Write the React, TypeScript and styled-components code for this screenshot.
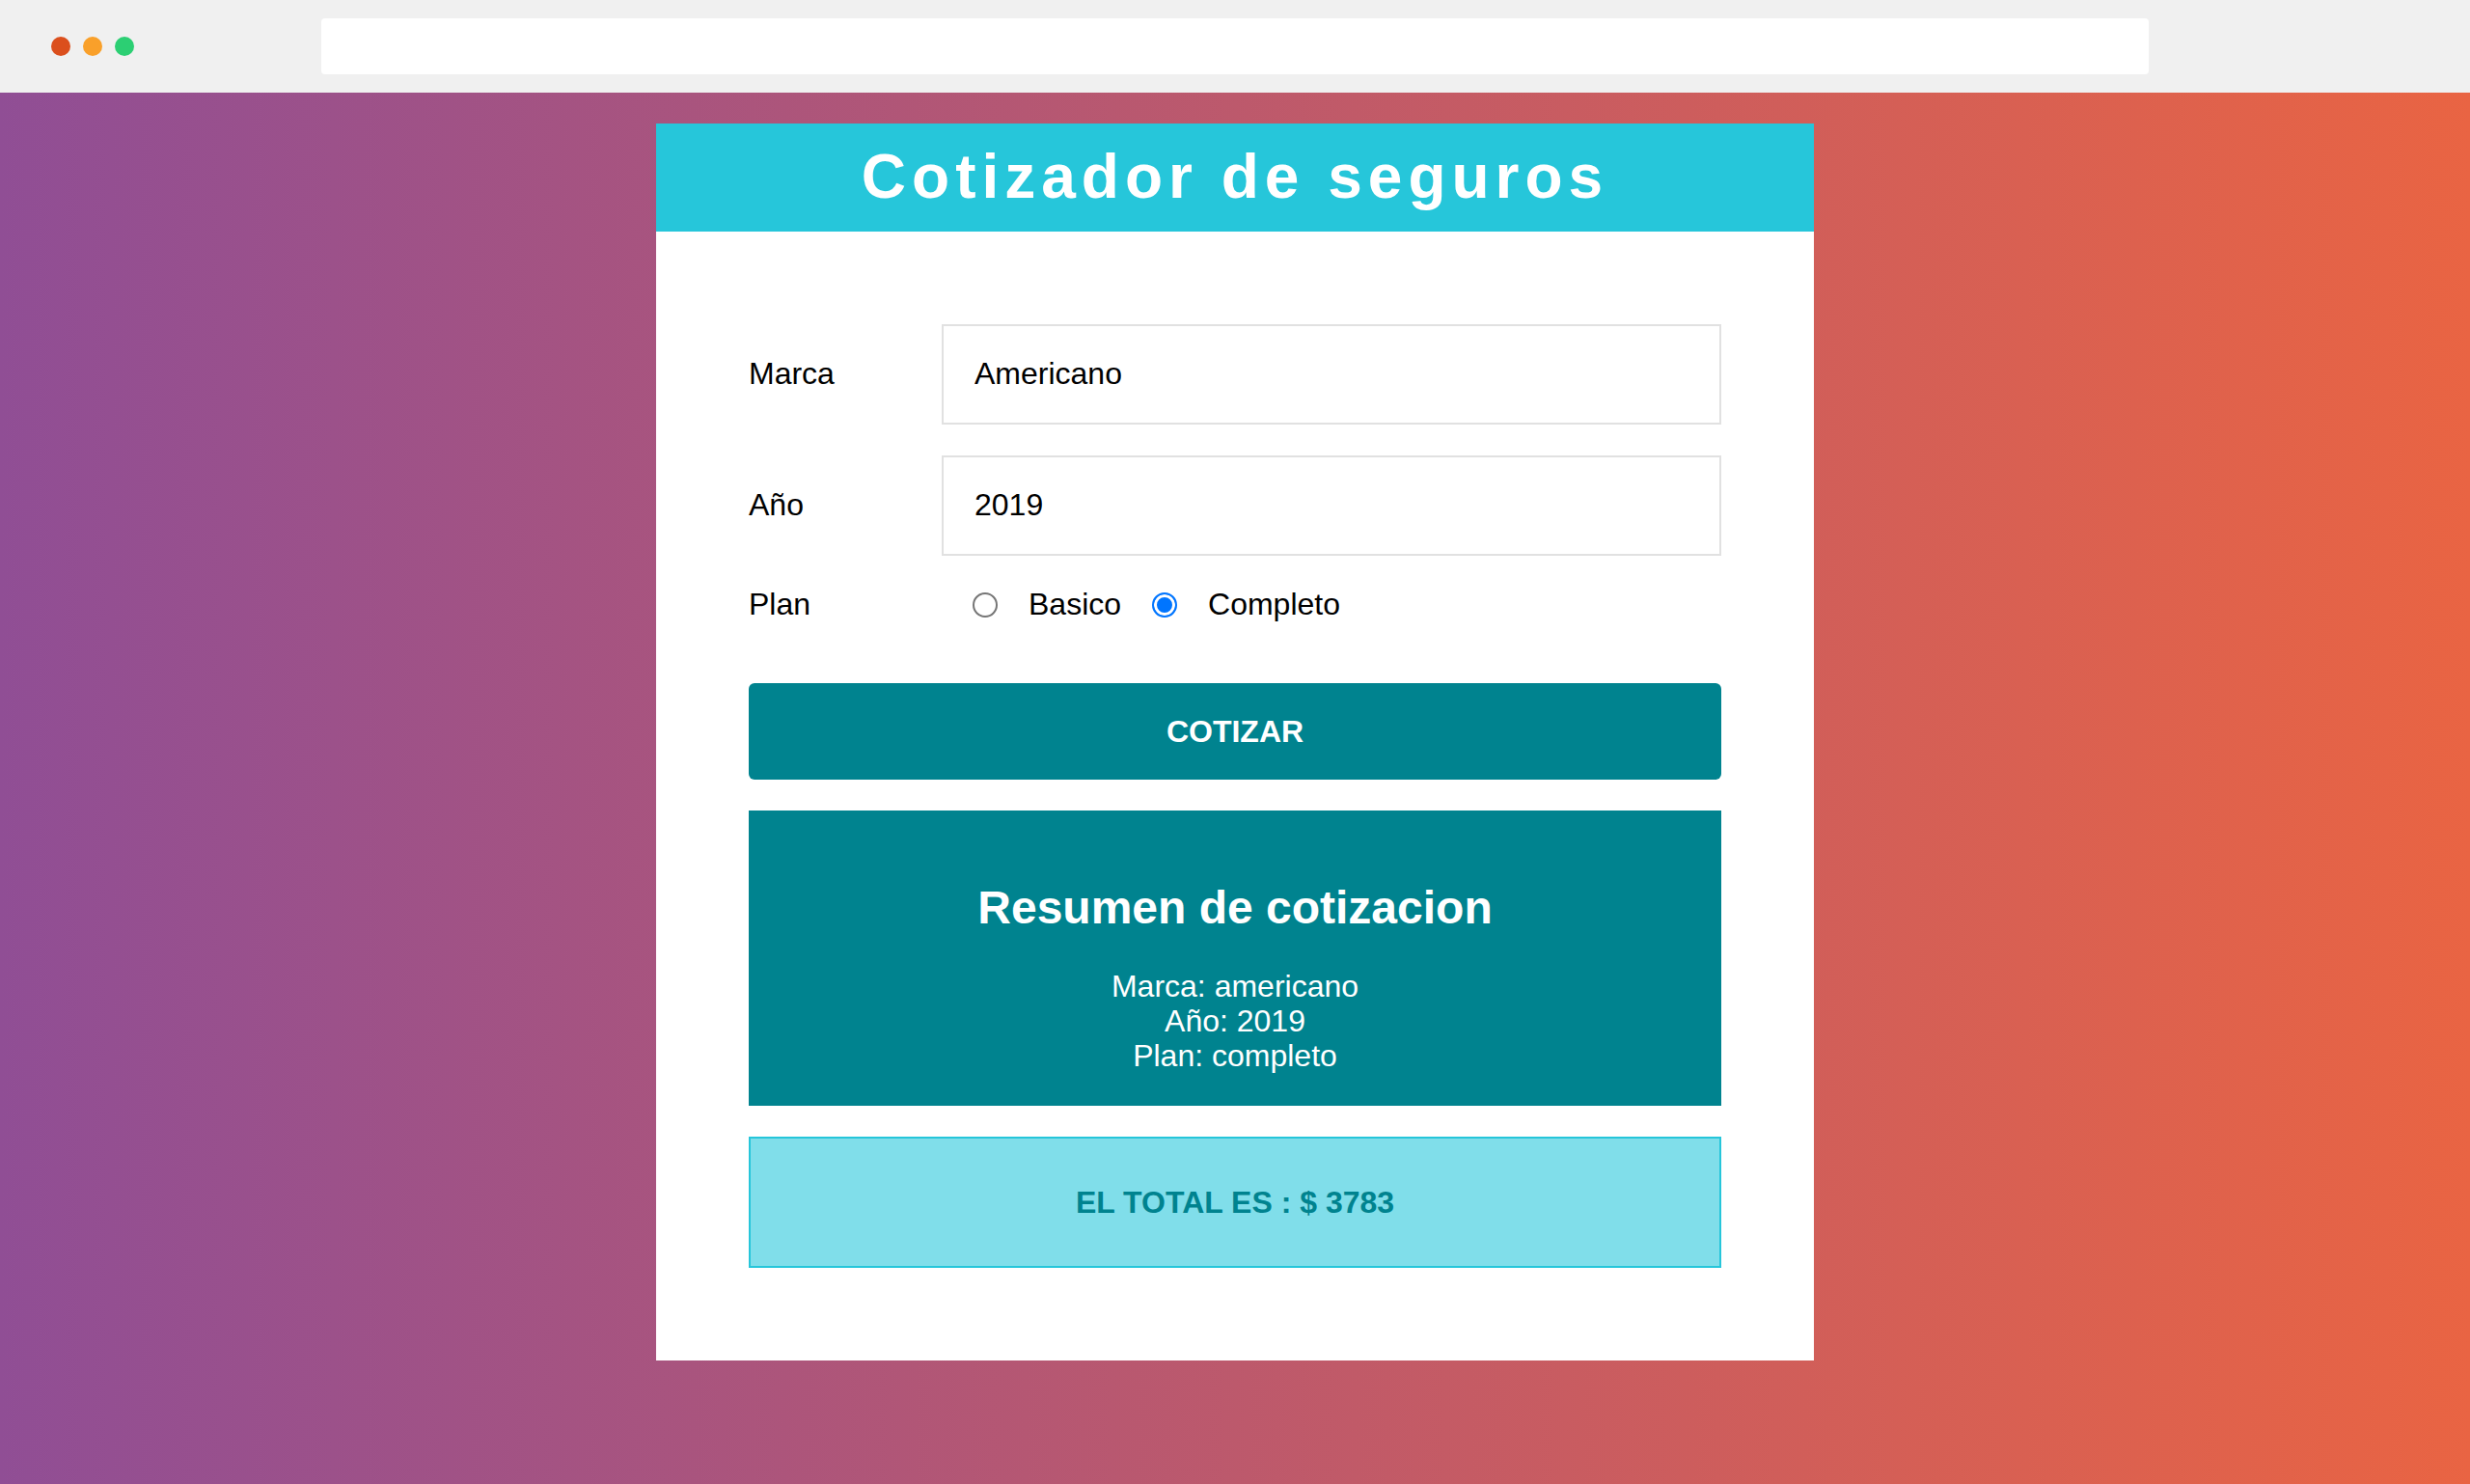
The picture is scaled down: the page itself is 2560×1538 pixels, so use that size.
import React, { useState } from "react";
import styled, { createGlobalStyle } from "styled-components";

const GlobalStyle = createGlobalStyle`
  * { box-sizing: border-box; }
  html, body { margin: 0; padding: 0; }
  body {
    font-family: "Liberation Sans", Arial, Helvetica, sans-serif;
    color: #000;
    background: #f0f0f0;
  }
`;

const Page = styled.div`
  display: flex;
  flex-direction: column;
  min-height: 100vh;
`;

const BrowserBar = styled.div`
  display: grid;
  grid-template-columns: 333px 1fr 333px;
  align-items: center;
  height: 96px;
  background: #f0f0f0;
`;

const Dots = styled.div`
  display: flex;
  gap: 13px;
  padding-left: 53px;
`;

const Dot = styled.span<{ $color: string }>`
  width: 20px;
  height: 20px;
  border-radius: 50%;
  background: ${(p) => p.$color};
`;

const UrlBar = styled.div`
  height: 58px;
  background: #ffffff;
  border-radius: 4px;
`;

const Stage = styled.main`
  flex: 1;
  display: flex;
  justify-content: center;
  align-items: flex-start;
  padding-top: 32px;
  background: linear-gradient(to right, #904e95, #e96443);
`;

const Card = styled.section`
  width: 1200px;
  background: #ffffff;
`;

const Header = styled.header`
  background: #26c6da;
  padding: 17px 0 19px;
`;

const Title = styled.h1`
  margin: 0;
  text-align: center;
  color: #ffffff;
  font-size: 64px;
  line-height: 76px;
  font-weight: 700;
  letter-spacing: 6px;
`;

const Body = styled.div`
  padding: 96px;
  display: flex;
  flex-direction: column;
`;

const Field = styled.div<{ $gap?: number }>`
  display: flex;
  align-items: center;
  margin-bottom: ${(p) => p.$gap ?? 32}px;
`;

const Label = styled.label`
  flex: 0 0 200px;
  font-size: 32px;
  line-height: 36px;
  padding-bottom: 2px;
`;

const TextInput = styled.input`
  flex: 1;
  min-width: 0;
  font-family: inherit;
  font-size: 32px;
  line-height: 36px;
  height: 104px;
  padding: 31px 32px 33px;
  border: 2px solid #e1e1e1;
  background: #fff;
  color: #000;
  outline: none;
  border-radius: 0;
`;

const Radio = styled.input`
  appearance: none;
  -webkit-appearance: none;
  width: 26px;
  height: 26px;
  margin: 0 32px;
  border-radius: 50%;
  border: 2px solid #767676;
  background: #fff;
  flex: 0 0 auto;

  &:checked {
    border-color: #0075ff;
    background: #0075ff;
    box-shadow: inset 0 0 0 3px #fff;
  }
`;

const RadioText = styled.span`
  font-size: 32px;
  line-height: 36px;
  padding-bottom: 2px;
`;

const Button = styled.button`
  width: 100%;
  height: 100px;
  margin-top: 32px;
  border: none;
  border-radius: 6px;
  background: #00838f;
  color: #fff;
  font-family: inherit;
  font-size: 32px;
  line-height: 36px;
  font-weight: 700;
  text-transform: uppercase;
  cursor: pointer;
`;

const Summary = styled.div`
  margin-top: 32px;
  background: #00838f;
  color: #fff;
  text-align: center;
  padding: 73px 32px 34px;
`;

const SummaryTitle = styled.h2`
  margin: 0 0 35px;
  font-size: 48px;
  line-height: 56px;
  font-weight: 700;
`;

const SummaryLine = styled.p`
  margin: 0;
  font-size: 32px;
  line-height: 36px;
`;

const Total = styled.div`
  margin-top: 32px;
  border: 2px solid #26c6da;
  background: #80deea;
  padding: 48px 32px;
  text-align: center;
`;

const TotalText = styled.p`
  margin: 0;
  color: #00838f;
  font-size: 32px;
  line-height: 36px;
  font-weight: 700;
  text-transform: uppercase;
`;

export default function App() {
  const [marca, setMarca] = useState("Americano");
  const [year, setYear] = useState("2019");
  const [plan, setPlan] = useState("completo");

  return (
    <>
      <GlobalStyle />
      <Page>
        <BrowserBar>
          <Dots>
            <Dot $color="#db4f1d" />
            <Dot $color="#f9a02a" />
            <Dot $color="#2ccf73" />
          </Dots>
          <UrlBar />
          <div />
        </BrowserBar>
        <Stage>
          <Card>
            <Header>
              <Title>Cotizador de seguros</Title>
            </Header>
            <Body>
              <Field>
                <Label>Marca</Label>
                <TextInput value={marca} onChange={(e) => setMarca(e.target.value)} />
              </Field>
              <Field>
                <Label>Año</Label>
                <TextInput value={year} onChange={(e) => setYear(e.target.value)} />
              </Field>
              <Field $gap={30}>
                <Label>Plan</Label>
                <Radio
                  type="radio"
                  name="plan"
                  value="basico"
                  checked={plan === "basico"}
                  onChange={() => setPlan("basico")}
                />
                <RadioText>Basico</RadioText>
                <Radio
                  type="radio"
                  name="plan"
                  value="completo"
                  checked={plan === "completo"}
                  onChange={() => setPlan("completo")}
                />
                <RadioText>Completo</RadioText>
              </Field>
              <Button type="button">Cotizar</Button>
              <Summary>
                <SummaryTitle>Resumen de cotizacion</SummaryTitle>
                <SummaryLine>Marca: {marca.toLowerCase()}</SummaryLine>
                <SummaryLine>Año: {year}</SummaryLine>
                <SummaryLine>Plan: {plan}</SummaryLine>
              </Summary>
              <Total>
                <TotalText>El total es : $ 3783</TotalText>
              </Total>
            </Body>
          </Card>
        </Stage>
      </Page>
    </>
  );
}
